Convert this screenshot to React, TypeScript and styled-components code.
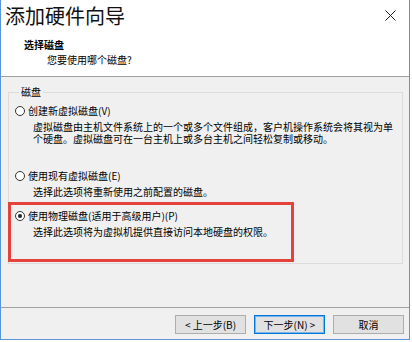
import React from "react";
import styled, { createGlobalStyle } from "styled-components";

const Global = createGlobalStyle`
  html, body { margin: 0; padding: 0; background: #ffffff; }
  body { font-family: "Noto Sans CJK SC", "Noto Sans", sans-serif; color: #000; }
  *, *::before, *::after { box-sizing: border-box; }
`;

const Window = styled.div`
  width: 410px;
  height: 340px;
  border: 1px solid #5a97d8;
  border-top: none;
  background: #f0f0f0;
  display: flex;
  flex-direction: column;
`;

const Top = styled.div`
  height: 77px;
  background: #ffffff;
  border-bottom: 1px solid #a0a0a0;
  display: flex;
  flex-direction: column;
`;

const TitleRow = styled.div`
  height: 36px;
  display: flex;
  align-items: center;
  justify-content: space-between;
  padding: 0 13px 4px 4px;
`;

const Title = styled.div`
  font-size: 20px;
  line-height: 22px;
  color: #111;
`;

const CloseButton = styled.div`
  width: 12px;
  height: 12px;
  display: flex;
  align-items: center;
  justify-content: center;
  margin-top: -2px;
`;

const Header = styled.div`
  padding: 1px 0 0 23px;
  display: flex;
  flex-direction: column;
`;

const HeaderTitle = styled.div`
  font-size: 10px;
  line-height: 15px;
  font-weight: 700;
`;

const HeaderSub = styled.div`
  font-size: 10px;
  line-height: 15px;
  padding-left: 23px;
`;

const Body = styled.div`
  flex: 1;
  padding: 9px 6px 0 7px;
`;

const GroupBox = styled.fieldset`
  margin: 0;
  border: 1px solid #dcdcdc;
  padding: 6px 0 25px 6px;
`;

const Legend = styled.legend`
  font-size: 10px;
  line-height: 12px;
  padding: 0 2px;
  margin-left: 4px;
`;

const Option = styled.div<{ $gap: number; $marked?: boolean }>`
  position: relative;
  margin-top: ${(p) => p.$gap}px;
  ${(p) =>
    p.$marked &&
    `
    &::before {
      content: "";
      position: absolute;
      top: -7px;
      left: -7px;
      width: 286px;
      height: 60px;
      border: 3px solid #e5423c;
      pointer-events: none;
    }
  `}
`;

const RadioRow = styled.div`
  height: 14px;
  display: flex;
  align-items: center;
  gap: 3px;
  font-size: 10px;
  line-height: 14px;
`;

const RadioCircle = styled.span<{ $checked?: boolean }>`
  width: 10px;
  height: 10px;
  border-radius: 50%;
  border: 1px solid #333;
  background: #fff;
  display: flex;
  align-items: center;
  justify-content: center;
  &::after {
    content: "";
    width: 4px;
    height: 4px;
    border-radius: 50%;
    background: ${(p) => (p.$checked ? "#222" : "transparent")};
  }
`;

const Desc = styled.div`
  margin: 3px 0 0 18px;
  display: flex;
  flex-direction: column;
`;

const DescLine = styled.div`
  height: 12px;
  font-size: 10px;
  line-height: 12px;
  white-space: nowrap;
`;

const Footer = styled.div`
  height: 32px;
  border-top: 1px solid #a0a0a0;
  display: flex;
  justify-content: flex-end;
  align-items: flex-start;
  gap: 8px;
  padding: 7px 5px 0 0;
`;

const Button = styled.div<{ $default?: boolean }>`
  width: 71px;
  height: 19px;
  background: #e1e1e1;
  border: 1px solid ${(p) => (p.$default ? "#0078d7" : "#adadad")};
  box-shadow: ${(p) => (p.$default ? "inset 0 0 0 1px #7ab4e8" : "none")};
  font-size: 10px;
  line-height: 17px;
  text-align: center;
  color: #000;
`;

const CloseIcon = () => (
  <svg width="11" height="11" viewBox="0 0 11 11">
    <path d="M0.5 0.5 L10.5 10.5 M10.5 0.5 L0.5 10.5" stroke="#222" strokeWidth="1" />
  </svg>
);

export default function App() {
  return (
    <>
      <Global />
      <Window>
        <Top>
          <TitleRow>
            <Title>添加硬件向导</Title>
            <CloseButton>
              <CloseIcon />
            </CloseButton>
          </TitleRow>
          <Header>
            <HeaderTitle>选择磁盘</HeaderTitle>
            <HeaderSub>您要使用哪个磁盘?</HeaderSub>
          </Header>
        </Top>
        <Body>
          <GroupBox>
            <Legend>磁盘</Legend>
            <Option $gap={0}>
              <RadioRow>
                <RadioCircle />
                创建新虚拟磁盘(V)
              </RadioRow>
              <Desc>
                <DescLine>虚拟磁盘由主机文件系统上的一个或多个文件组成，客户机操作系统会将其视为单</DescLine>
                <DescLine>个硬盘。虚拟磁盘可在一台主机上或多台主机之间轻松复制或移动。</DescLine>
              </Desc>
            </Option>
            <Option $gap={24}>
              <RadioRow>
                <RadioCircle />
                使用现有虚拟磁盘(E)
              </RadioRow>
              <Desc>
                <DescLine>选择此选项将重新使用之前配置的磁盘。</DescLine>
              </Desc>
            </Option>
            <Option $gap={11} $marked>
              <RadioRow>
                <RadioCircle $checked />
                使用物理磁盘(适用于高级用户)(P)
              </RadioRow>
              <Desc>
                <DescLine>选择此选项将为虚拟机提供直接访问本地硬盘的权限。</DescLine>
              </Desc>
            </Option>
          </GroupBox>
        </Body>
        <Footer>
          <Button>&lt; 上一步(B)</Button>
          <Button $default>下一步(N) &gt;</Button>
          <Button>取消</Button>
        </Footer>
      </Window>
    </>
  );
}
